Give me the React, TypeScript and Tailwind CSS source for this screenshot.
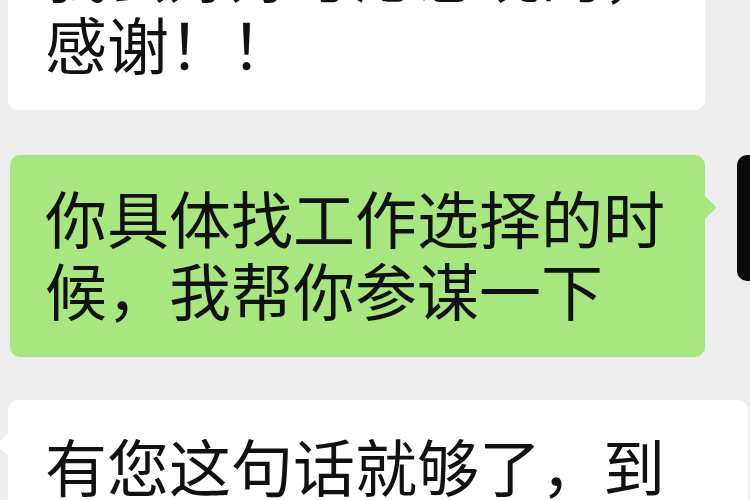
export default function App() {
  return (
    <div className="w-[750px] h-[500px] overflow-hidden bg-[#ededed] font-['Noto_Sans_CJK_SC','Noto_Sans',sans-serif] text-[#111111]">
      <div className="flex flex-col -mt-[93px]">
        {/* incoming message, partly scrolled off */}
        <div className="pl-[8px]">
          <div className="relative w-[697px] bg-white rounded-[10px] px-[37px] pt-[28px] pb-[31px] text-[62px] leading-[72px]">
            我会好好考虑您说的，感谢！！
          </div>
        </div>

        {/* my message */}
        <div className="flex items-start mt-[45px] pl-[10px]">
          <div className="relative shrink-0 w-[695px] bg-[#a8e67f] rounded-[10px] pl-[35px] pr-[20px] pt-[26px] pb-[32px] text-[62px] leading-[72px]">
            你具体找工作选择的时候，我帮你参谋一下
            <div className="absolute -right-[8px] top-[44px] w-[17px] h-[17px] rotate-45 bg-[#a8e67f] rounded-[2px]" />
          </div>
          <div className="ml-[32px] shrink-0 w-[90px] h-[126px] bg-[#0a0a0a] rounded-[10px]" />
        </div>

        {/* incoming reply */}
        <div className="mt-[43px] pl-[8px]">
          <div className="relative w-[740px] bg-white rounded-[10px] pl-[37px] pr-[60px] pt-[29px] pb-[24px] text-[62px] leading-[72px]">
            有您这句话就够了，到时候一定找您
            <div className="absolute -left-[8px] top-[36px] w-[17px] h-[17px] rotate-45 bg-white rounded-[2px]" />
          </div>
        </div>
      </div>
    </div>
  );
}
